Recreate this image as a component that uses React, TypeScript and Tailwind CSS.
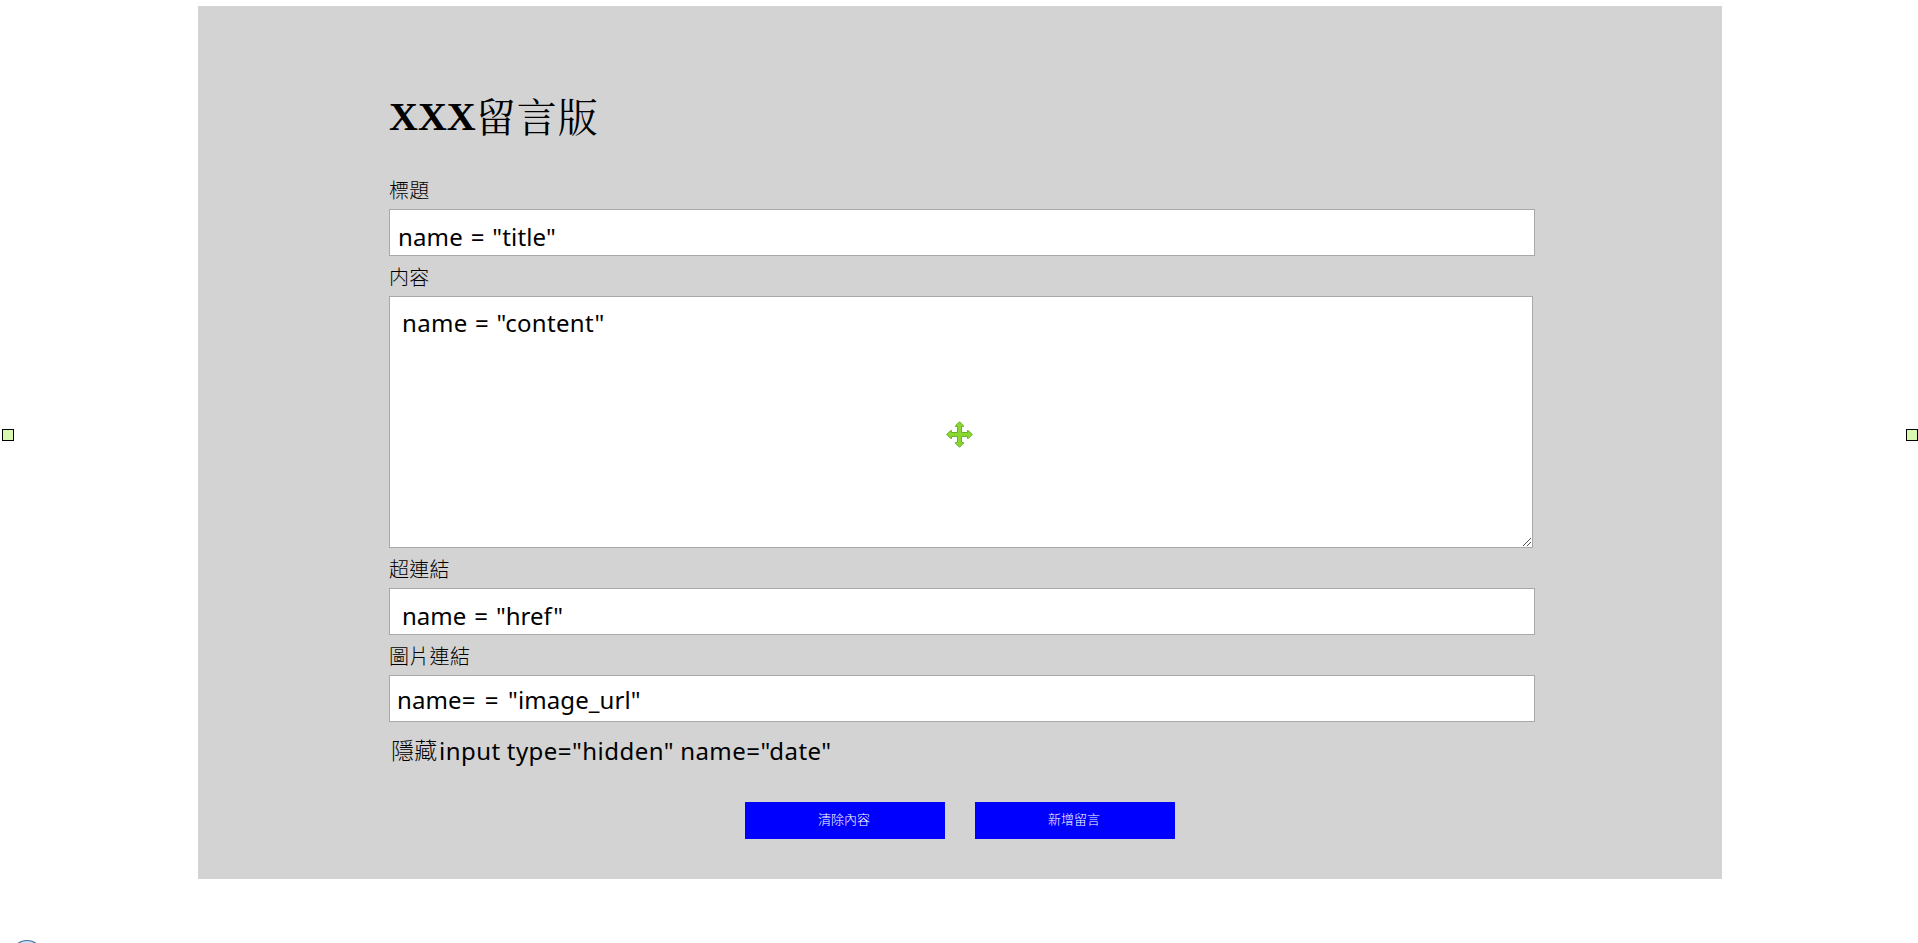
const LATIN = "font-['Noto_Sans','Noto_Sans_CJK_TC',sans-serif]";

function Label({ text, className }: { text: string; className: string }) {
  return (
    <label className={`block font-['Noto_Sans_CJK_TC',sans-serif] text-[20px] leading-[30px] font-light tracking-[0.3px] ${className}`}>
      {text}
    </label>
  );
}

const field = `block w-[1146px] h-[47px] border border-[#a9a9a9] bg-white text-[24px] leading-[33px] outline-none ${LATIN}`;

function Handle() {
  return <div className="size-3 border border-black bg-[#d8f8b0]" />;
}

function MoveCross() {
  return (
    <svg
      className="absolute top-[421px] left-[946px]"
      width="27"
      height="27"
      viewBox="0 0 27 27"
      fill="#8cd62f"
      stroke="#63b32e"
      strokeWidth="1"
    >
      <path d="M13.5 .7 L17.5 4.7 V5.5 H15.5 V11.5 H21.5 V9.5 H22.3 L26.3 13.5 L22.3 17.5 H21.5 V15.5 H15.5 V21.5 H17.5 V22.3 L13.5 26.3 L9.5 22.3 V21.5 H11.5 V15.5 H5.5 V17.5 H4.7 L.7 13.5 L4.7 9.5 H5.5 V11.5 H11.5 V5.5 H9.5 V4.7 Z" />
    </svg>
  );
}

export default function App() {
  return (
    <div className="relative h-[943px] w-[1918px] overflow-hidden bg-white pt-[6px] text-black">
      <main className="ml-[198px] h-[873px] w-[1524px] bg-[#d3d3d3] pt-[83px] pl-[191px]">
        <h1 className="flex h-[86px] font-['Liberation_Serif','Noto_Serif_CJK_TC',serif] text-[40px] leading-[56px]">
          <span className="font-bold">XXX</span>
          <span className="pt-[2px] font-normal tracking-[1px]">留言版</span>
        </h1>
        <Label text="標題" className="h-[34px]" />
        <input
          name="title"
          defaultValue={'name = "title"'}
          className={`${field} pt-[10px] pb-[2px] pl-[8px] tracking-[0.15px] [word-spacing:1.4px]`}
        />
        <Label text="内容" className="mt-[6px] h-[34px]" />
        <div className="relative w-[1144px]">
          <textarea
            name="content"
            defaultValue={'name = "content"'}
            className={`block h-[252px] w-[1144px] resize-none border border-[#a9a9a9] bg-white pt-[9px] pl-[12px] text-[24px] leading-[33px] tracking-[0.3px] [word-spacing:1px] outline-none ${LATIN}`}
          />
          <svg className="absolute right-[2px] bottom-[2px]" width="8" height="8" viewBox="0 0 8 8" stroke="#555" strokeWidth="1">
            <path d="M0 8 L8 0 M4 8 L8 4" />
          </svg>
        </div>
        <Label text="超連結" className="mt-[6px] h-[34px]" />
        <input
          name="href"
          defaultValue={'name = "href"'}
          className={`${field} pt-[10px] pb-[2px] pl-[12px] tracking-[-0.02px] [word-spacing:1.8px]`}
        />
        <Label text="圖片連結" className="mt-[6px] h-[34px]" />
        <input
          name="image_url"
          defaultValue={'name= = "image_url"'}
          className={`${field} pt-[7px] pb-[5px] pl-[7px] tracking-[0.1px] [word-spacing:3px]`}
        />
        <p className={`mt-[12px] flex h-[68px] pl-[2px] text-[24px] leading-[33px] ${LATIN}`}>
          <span className="w-[48px] text-[23px] font-light tracking-[0.3px]">隱藏</span>
          <span className="tracking-[0.46px] [word-spacing:-0.5px]">{'input type="hidden" name="date"'}</span>
        </p>
        <div className="ml-[356px] flex gap-[30px] font-['Noto_Sans_CJK_TC',sans-serif] text-[13px] font-light text-white">
          <button className="h-[37px] w-[200px] bg-[#0000ff] pr-[2px] pb-[3px]">清除內容</button>
          <button className="h-[37px] w-[200px] bg-[#0000ff] pr-[2px] pb-[3px]">新增留言</button>
        </div>
      </main>
      <div className="absolute top-[429px] left-[2px]">
        <Handle />
      </div>
      <div className="absolute top-[429px] left-[1906px]">
        <Handle />
      </div>
      <MoveCross />
      <svg className="absolute top-[939px] left-[10px]" width="34" height="34" viewBox="0 0 34 34">
        <circle cx="17" cy="17" r="15.5" fill="#cfe3f3" stroke="#3a6f9f" strokeWidth="1.2" />
      </svg>
    </div>
  );
}
